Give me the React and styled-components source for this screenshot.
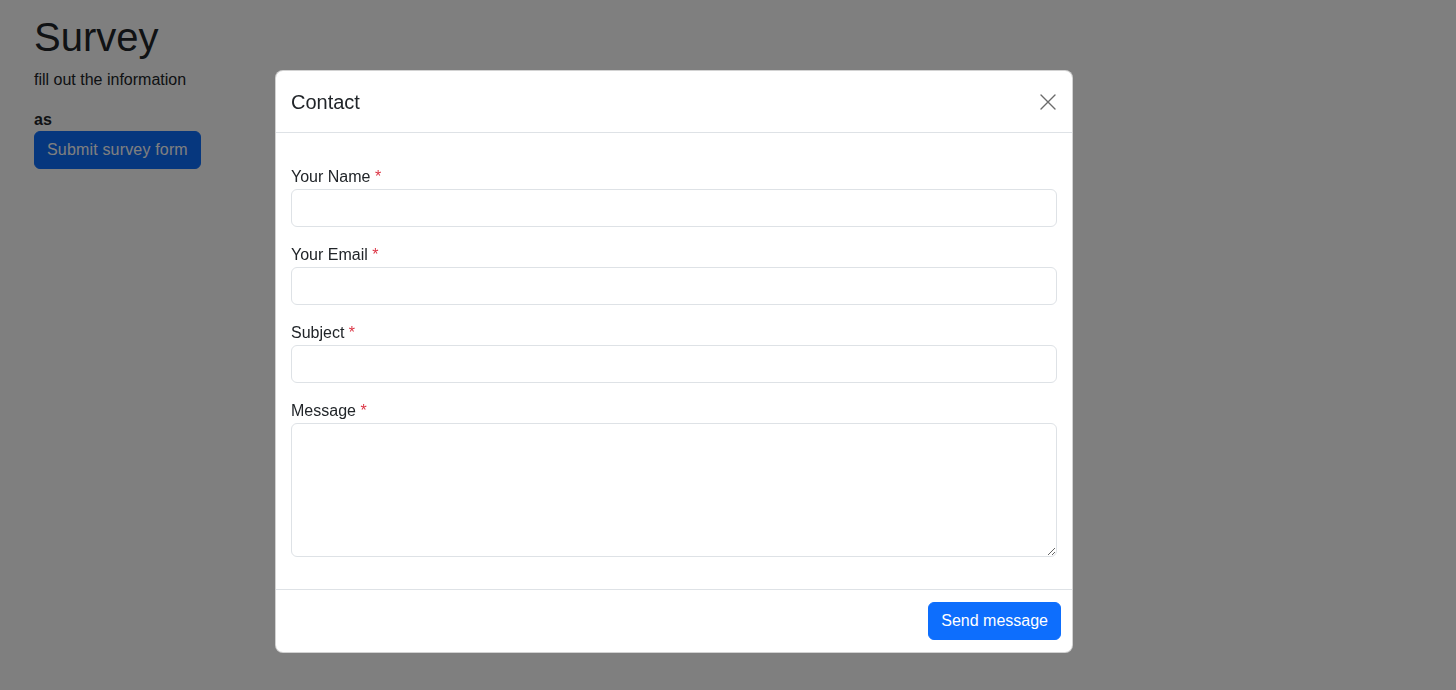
import styled, { createGlobalStyle } from "styled-components";

const GlobalStyle = createGlobalStyle`
  html, body {
    margin: 0;
    padding: 0;
    background: #fff;
    color: #212529;
    font-family: "Liberation Sans", Arial, sans-serif;
    font-size: 16px;
    line-height: 1.5;
  }
  * { box-sizing: border-box; }
`;

const fields = [
  { id: "name", label: "Your Name" },
  { id: "email", label: "Your Email" },
  { id: "subject", label: "Subject" },
];

function CloseIcon() {
  return (
    <svg width="16" height="16" viewBox="0 0 16 16" fill="none">
      <path d="M1 1 L15 15 M15 1 L1 15" stroke="currentColor" strokeWidth="1.4" strokeLinecap="round" />
    </svg>
  );
}

export default function App() {
  return (
    <>
      <GlobalStyle />
      <Page>
        <Title>Survey</Title>
        <Lead>fill out the information</Lead>
        <Strong>as</Strong>
        <Button type="button" $wide>Submit survey form</Button>
      </Page>

      <Backdrop />

      <ModalWrap>
        <Modal role="dialog" aria-label="Contact">
          <Header>
            <ModalTitle>Contact</ModalTitle>
            <CloseButton type="button" aria-label="Close">
              <CloseIcon />
            </CloseButton>
          </Header>

          <Body>
            {fields.map((f) => (
              <Group key={f.id}>
                <Label htmlFor={f.id}>
                  {f.label} <Req>*</Req>
                </Label>
                <Input id={f.id} type="text" />
              </Group>
            ))}
            <Group>
              <Label htmlFor="message">
                Message <Req>*</Req>
              </Label>
              <TextArea id="message" />
            </Group>
          </Body>

          <Footer>
            <Button type="button">Send message</Button>
          </Footer>
        </Modal>
      </ModalWrap>
    </>
  );
}

const Page = styled.div`
  padding: 13px 34px;
  display: flex;
  flex-direction: column;
  align-items: flex-start;
`;

const Title = styled.h1`
  margin: 0 0 7px;
  font-size: 40px;
  font-weight: 500;
  line-height: 1.2;
`;

const Lead = styled.p`
  margin: 0 0 16px;
`;

const Strong = styled.div`
  font-weight: 700;
  line-height: 23px;
`;

const Button = styled.button`
  font-family: inherit;
  font-size: 16px;
  line-height: 24px;
  padding: 6px 12px;
  letter-spacing: ${({ $wide }) => ($wide ? "0.17px" : "0")};
  color: #fff;
  background: #0d6efd;
  border: 1px solid #0d6efd;
  border-radius: 6px;
  cursor: pointer;
`;

const Backdrop = styled.div`
  position: fixed;
  inset: 0;
  background: rgba(0, 0, 0, 0.5);
`;

const ModalWrap = styled.div`
  position: fixed;
  top: 70px;
  left: 275px;
`;

const Modal = styled.div`
  width: 798px;
  background: #fff;
  border: 1px solid rgba(0, 0, 0, 0.175);
  border-radius: 8px;
  display: flex;
  flex-direction: column;
`;

const Header = styled.div`
  display: flex;
  align-items: center;
  justify-content: space-between;
  height: 62px;
  padding: 0 16px 0 15px;
  border-bottom: 1px solid #dee2e6;
`;

const ModalTitle = styled.h5`
  margin: 0;
  font-size: 20px;
  font-weight: 500;
  line-height: 1.5;
`;

const CloseButton = styled.button`
  display: flex;
  align-items: center;
  justify-content: center;
  width: 16px;
  height: 16px;
  padding: 0;
  border: 0;
  background: transparent;
  color: #6b6b6b;
  cursor: pointer;
`;

const Body = styled.div`
  padding: 32px 15px 32px;
  display: flex;
  flex-direction: column;
  gap: 16px;
`;

const Group = styled.div`
  display: flex;
  flex-direction: column;
`;

const Label = styled.label`
  font-size: 16px;
  line-height: 24px;
`;

const Req = styled.span`
  color: #dc3545;
`;

const Input = styled.input`
  height: 38px;
  width: 100%;
  padding: 6px 12px;
  font: inherit;
  border: 1px solid #dee2e6;
  border-radius: 6px;
  background: #fff;
  outline: none;
`;

const TextArea = styled.textarea`
  height: 134px;
  width: 100%;
  padding: 6px 12px;
  font: inherit;
  border: 1px solid #dee2e6;
  border-radius: 6px;
  background: #fff;
  outline: none;
  resize: vertical;
`;

const Footer = styled.div`
  display: flex;
  justify-content: flex-end;
  padding: 12px 11px;
  border-top: 1px solid #dee2e6;
`;
